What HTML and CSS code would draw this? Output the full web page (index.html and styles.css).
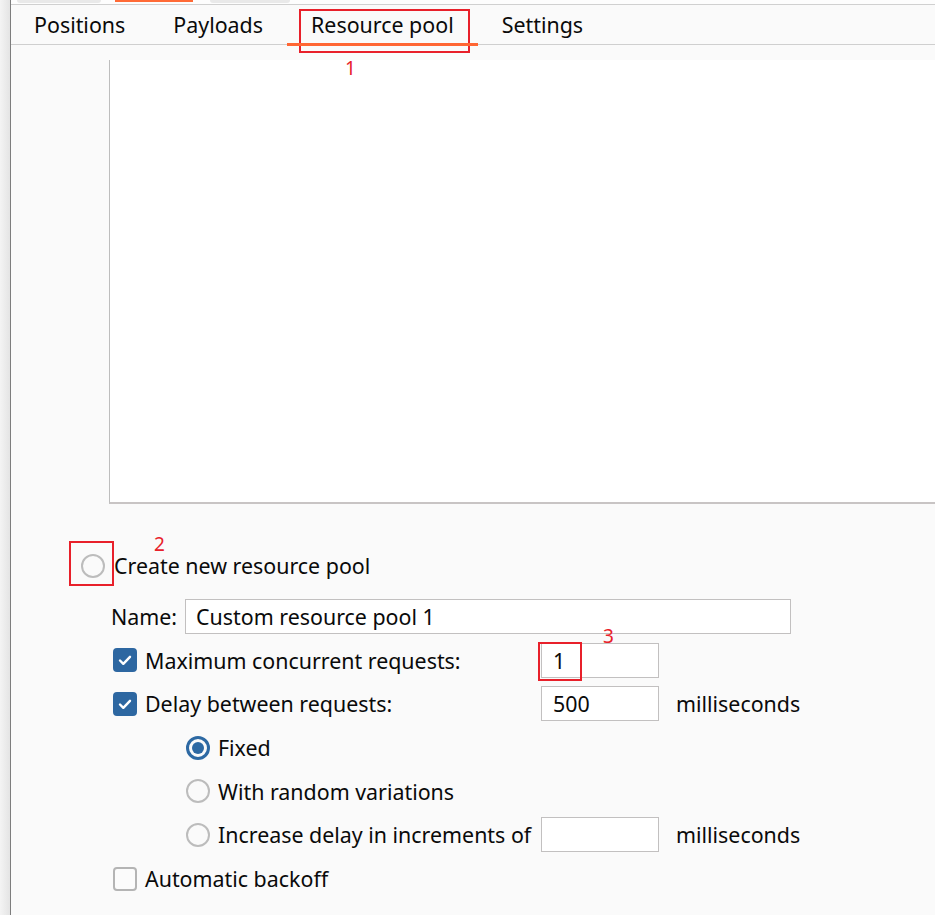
FILE: index.html
```html
<!DOCTYPE html>
<html>
<head>
<meta charset="utf-8">
<link rel="stylesheet" href="styles.css">
</head>
<body>
<div class="rail"></div>
<div class="main">
  <div class="toptabs">
    <span class="ttab t1"></span>
    <span class="ttab t2 active"></span>
    <span class="ttab t3"></span>
  </div>
  <div class="tabbar">
    <div class="tab">Positions</div>
    <div class="tab">Payloads</div>
    <div class="tab selected">Resource pool
      <span class="anno anno1"></span>
      <span class="anno-num num1">1</span>
    </div>
    <div class="tab">Settings</div>
  </div>
  <div class="listarea">
    <div class="listbox"></div>
  </div>
  <div class="form">
    <div class="newpool">
      <span class="radio"></span>
      <span class="label">Create new resource pool</span>
      <span class="anno anno2"></span>
      <span class="anno-num num2">2</span>
    </div>
    <div class="grid">
      <div class="namerow">
        <span class="label">Name:</span>
        <div class="input wide">Custom resource pool 1</div>
      </div>

      <div class="cell">
        <span class="check on"><svg viewBox="0 0 24 24" width="24" height="24"><path d="M7 12.5l3.3 3.3L17 8.8" fill="none" stroke="#fff" stroke-width="2.4" stroke-linecap="round" stroke-linejoin="round"/></svg></span>
        <span class="label">Maximum concurrent requests:</span>
      </div>
      <div class="input num">1<span class="anno anno3"></span><span class="anno-num num3">3</span></div>
      <div></div>

      <div class="cell">
        <span class="check on"><svg viewBox="0 0 24 24" width="24" height="24"><path d="M7 12.5l3.3 3.3L17 8.8" fill="none" stroke="#fff" stroke-width="2.4" stroke-linecap="round" stroke-linejoin="round"/></svg></span>
        <span class="label">Delay between requests:</span>
      </div>
      <div class="input num">500</div>
      <div class="unit">milliseconds</div>

      <div class="cell indent">
        <span class="radio sel"></span>
        <span class="label">Fixed</span>
      </div>
      <div></div>
      <div></div>

      <div class="cell indent">
        <span class="radio"></span>
        <span class="label">With random variations</span>
      </div>
      <div></div>
      <div></div>

      <div class="cell indent">
        <span class="radio"></span>
        <span class="label">Increase delay in increments of</span>
      </div>
      <div class="input num"></div>
      <div class="unit">milliseconds</div>

      <div class="cell">
        <span class="check"></span>
        <span class="label">Automatic backoff</span>
      </div>
      <div></div>
      <div></div>
    </div>
  </div>
</div>
</body>
</html>
```

FILE: styles.css
```css
html, body {
  margin: 0;
  padding: 0;
}
body {
  background: #fafafa;
  display: flex;
  width: 935px;
  height: 915px;
  overflow: hidden;
  font-family: "Noto Sans", "Open Sans", sans-serif;
  font-size: 21.4px;
  color: #0a0a0a;
}
.rail {
  width: 10px;
  flex: none;
  background: linear-gradient(to right, #f4f4f4, #e4e4e4);
  border-right: 1px solid #7d7d7d;
}
.main {
  flex: 1;
  display: flex;
  flex-direction: column;
  min-width: 0;
}
.toptabs {
  height: 4px;
  background: #fdfdfd;
  border-bottom: 1px solid #d0d0d0;
  display: flex;
  position: relative;
}
.ttab {
  height: 3px;
  background: #e9e9e9;
  border-radius: 0 0 3px 3px;
}
.t1 { margin-left: 6px; width: 84px; }
.t2 { margin-left: 14px; width: 78px; height: 2px; background: #ff6a36; border-radius: 0; }
.t3 { margin-left: 17px; width: 80px; }
.tabbar {
  height: 39px;
  border-bottom: 1px solid #cfcfcf;
  display: flex;
  align-items: center;
}
.tab {
  position: relative;
  padding: 0 24px;
  height: 39px;
  line-height: 39px;
  box-sizing: border-box;
}
.tab:first-child { padding-left: 23px; }
.tab.selected::after {
  content: "";
  position: absolute;
  left: 0;
  right: 0;
  bottom: -2px;
  height: 3px;
  background: #ff6633;
}
.anno {
  position: absolute;
  border: 2px solid #e8202a;
  box-sizing: border-box;
  pointer-events: none;
}
.anno-num {
  position: absolute;
  color: #e8202a;
  font-size: 19px;
  line-height: 19px;
}
.anno1 { left: 12px; top: 4px; width: 171px; height: 44px; }
.num1 { left: 58px; top: 54px; }
.listarea {
  padding: 15px 0 0 98px;
}
.listbox {
  height: 442px;
  background: #fff;
  border-left: 1px solid #bdbdbd;
  border-bottom: 2px solid #c8c4c4;
}
.form {
  padding: 50px 0 0 70px;
}
.newpool {
  position: relative;
  display: flex;
  align-items: center;
  height: 24px;
  gap: 9px;
}
.newpool .label {
  line-height: 20px;
}
.anno2 { left: -12px; top: -13px; width: 45px; height: 45px; }
.num2 { left: 73px; top: -17px; line-height: 15px; }
.radio {
  width: 24px;
  height: 24px;
  border: 2px solid #bcbcbc;
  border-radius: 50%;
  box-sizing: border-box;
  background: #fafafa;
  flex: none;
  position: relative;
}
.radio.sel {
  border: 3px solid #2d69a3;
}
.radio.sel::after {
  content: "";
  position: absolute;
  left: 3px;
  top: 3px;
  width: 12px;
  height: 12px;
  border-radius: 50%;
  background: #2d69a3;
}
.grid {
  margin-top: 21px;
  margin-left: 32px;
  display: grid;
  grid-template-columns: 428px 118px auto;
  grid-auto-rows: 35px;
  row-gap: 8.7px;
  column-gap: 0;
  align-items: center;
}
.namerow {
  grid-column: 1 / -1;
  display: flex;
  align-items: center;
  gap: 8px;
  margin-left: -2px;
}
.cell {
  display: flex;
  align-items: center;
  gap: 8px;
}
.cell.indent {
  padding-left: 73px;
}
.check {
  width: 24px;
  height: 24px;
  border-radius: 4px;
  border: 2px solid #b4b4b4;
  box-sizing: border-box;
  background: #fbfbfb;
  flex: none;
}
.check.on {
  background: #2d67a1;
  border-color: #2d67a1;
  display: flex;
  align-items: center;
  justify-content: center;
}
.check.on svg {
  flex: none;
}
.input {
  position: relative;
  height: 35px;
  background: #fff;
  border: 1px solid #c2c0c0;
  box-sizing: border-box;
  line-height: 33px;
  padding-left: 10px;
}
.input.wide {
  width: 606px;
}
.input.num {
  width: 118px;
  padding-left: 11px;
}
.anno3 { left: -4px; top: -2px; width: 44px; height: 39px; }
.num3 { left: 61px; top: -17px; }
.unit {
  white-space: nowrap;
  padding-left: 17px;
}
```
